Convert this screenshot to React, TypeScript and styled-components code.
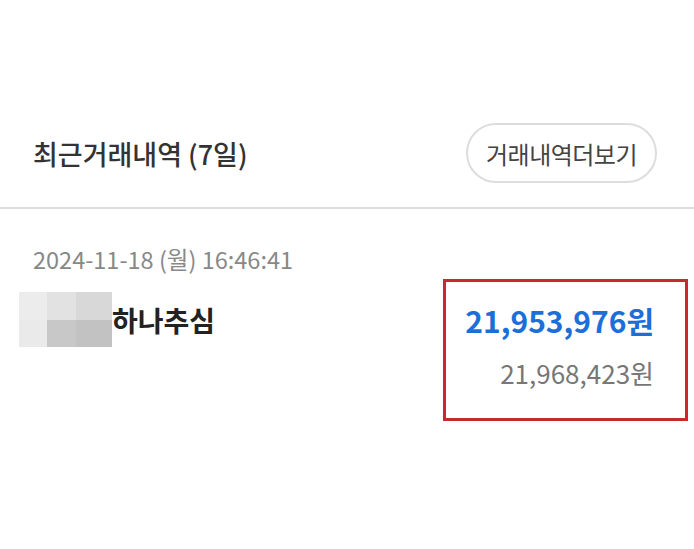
import styled, { createGlobalStyle } from "styled-components";

const GlobalStyle = createGlobalStyle`
  body {
    margin: 0;
    background: #ffffff;
    font-family: "Noto Sans CJK KR", "Noto Sans", sans-serif;
  }
`;

const blurCells = ["#ececec", "#e2e2e2", "#d8d8d8", "#eaeaea", "#c8c8c8", "#c2c2c2"];

export default function App() {
  return (
    <>
      <GlobalStyle />
      <Page>
        <Header>
          <Title>최근거래내역 (7일)</Title>
          <MoreButton>거래내역더보기</MoreButton>
        </Header>
        <Divider />
        <Row>
          <LeftCol>
            <DateText>2024-11-18 (월) 16:46:41</DateText>
            <NameRow>
              <Masked>
                {blurCells.map((color, index) => (
                  <MaskCell key={index} color={color} />
                ))}
              </Masked>
              <Name>하나추심</Name>
            </NameRow>
          </LeftCol>
          <AmountBox>
            <Amount>21,953,976원</Amount>
            <Balance>21,968,423원</Balance>
          </AmountBox>
        </Row>
      </Page>
    </>
  );
}

const Page = styled.div`
  width: 694px;
  height: 549px;
  padding-top: 123px;
  box-sizing: border-box;
  overflow: hidden;
`;

const Header = styled.div`
  display: flex;
  align-items: center;
  justify-content: space-between;
  padding: 0 37px 0 33px;
  height: 60px;
`;

const Title = styled.h2`
  margin: 0;
  font-size: 27px;
  font-weight: 500;
  color: #333333;
`;

const MoreButton = styled.button`
  height: 60px;
  width: 191px;
  padding: 0;
  border: 2px solid #dddddd;
  border-radius: 30px;
  background: #ffffff;
  font-family: inherit;
  font-size: 24px;
  letter-spacing: -0.5px;
  color: #444444;
`;

const Divider = styled.div`
  margin-top: 24px;
  height: 2px;
  background: #dcdcdc;
`;

const Row = styled.div`
  display: flex;
  justify-content: space-between;
  align-items: flex-start;
  padding: 34px 6px 0 19px;
`;

const LeftCol = styled.div`
  display: flex;
  flex-direction: column;
`;

const DateText = styled.div`
  padding-left: 14px;
  font-size: 23.5px;
  color: #888888;
  line-height: 32px;
`;

const NameRow = styled.div`
  display: flex;
  align-items: center;
  margin-top: 17px;
`;

const Masked = styled.div`
  display: grid;
  grid-template-columns: 28px 29px 36px;
  grid-template-rows: 28px 27px;
`;

const MaskCell = styled.div<{ color: string }>`
  background: ${(props) => props.color};
`;

const Name = styled.div`
  font-size: 28px;
  font-weight: 700;
  color: #222222;
`;

const AmountBox = styled.div`
  margin-top: 36px;
  width: 245px;
  height: 142px;
  box-sizing: border-box;
  border: 3px solid #c8282e;
  display: flex;
  flex-direction: column;
  align-items: flex-end;
  padding: 16px 31px 0 0;
`;

const Amount = styled.div`
  font-size: 30px;
  font-weight: 700;
  color: #1d6fd8;
  line-height: 44px;
`;

const Balance = styled.div`
  margin-top: 13px;
  font-size: 26px;
  color: #777777;
  line-height: 36px;
`;
